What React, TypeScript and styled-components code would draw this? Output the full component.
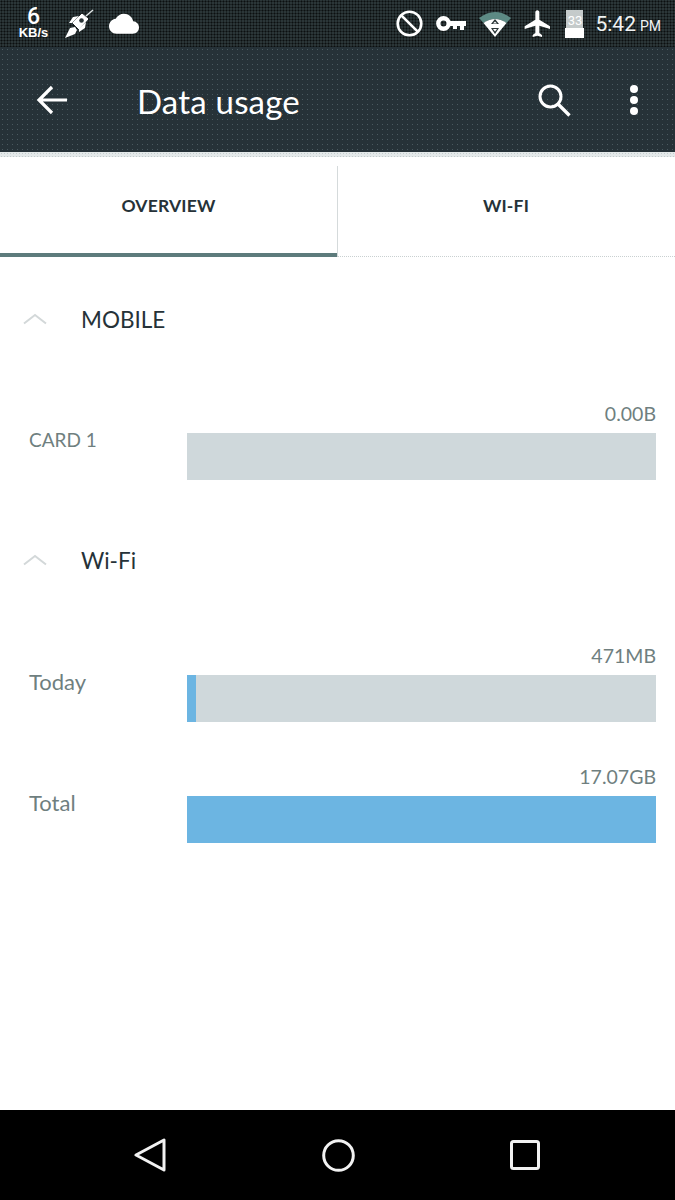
import React from "react";
import styled, { createGlobalStyle } from "styled-components";

const GlobalStyle = createGlobalStyle`
  html, body {
    margin: 0;
    padding: 0;
    background: #fff;
  }
`;

const Page = styled.div`
  width: 675px;
  height: 1200px;
  display: flex;
  flex-direction: column;
  overflow: hidden;
  background: #fff;
  font-family: Lato, "Open Sans", sans-serif;
`;

const StatusBar = styled.div`
  height: 47px;
  flex: none;
  display: flex;
  align-items: center;
  justify-content: space-between;
  padding: 0 14px 0 17px;
  box-sizing: border-box;
  color: #fff;
  background-color: #2b3638;
  background-image: radial-gradient(#0b0f10 0.9px, transparent 1.1px);
  background-size: 3px 3px;
`;

const StatusGroup = styled.div`
  display: flex;
  align-items: center;
  gap: ${(p: { $gap: number }) => p.$gap}px;
`;

const Speed = styled.div`
  width: 33px;
  display: flex;
  flex-direction: column;
  align-items: center;
  font-family: "Liberation Sans", Arial, sans-serif;
  font-weight: 700;
  font-size: 13px;
  line-height: 15px;

  b {
    font-size: 23px;
    line-height: 17px;
    font-family: Roboto, sans-serif;
    font-weight: 500;
  }
`;

const Clock = styled.div`
  margin-left: -2px;
  display: flex;
  align-items: baseline;
  gap: 4px;
  font-family: Roboto, sans-serif;
  font-size: 21px;
  color: #f1f3f3;

  small {
    font-size: 14px;
  }
`;

const BatteryBox = styled.div`
  width: 19px;
  height: 28px;
  display: flex;
  flex-direction: column;
`;

const BatteryEmpty = styled.div`
  height: 18px;
  background-color: #7d8788;
  background-image: radial-gradient(#c8cdcd 0.7px, transparent 0.9px);
  background-size: 2px 2px;
  display: flex;
  align-items: flex-end;
  justify-content: center;
  font-family: Roboto, sans-serif;
  font-size: 13px;
  line-height: 14px;
  color: #fff;
  margin: 0 1px;
`;

const BatteryFull = styled.div`
  flex: 1;
  background: #fff;
`;

const Toolbar = styled.div`
  height: 105px;
  flex: none;
  display: flex;
  align-items: center;
  box-sizing: border-box;
  padding: 0 36px 0 36px;
  background-color: #263238;
  background-image: radial-gradient(#4a5a60 0.55px, transparent 0.75px);
  background-size: 5px 5px;
  color: #fff;
`;

const Title = styled.div`
  flex: 1;
  margin-left: 69px;
  padding-top: 3px;
  font-size: 33px;
  font-weight: 400;
  letter-spacing: 0.2px;
`;

const ToolbarActions = styled.div`
  display: flex;
  align-items: center;
  gap: 58px;
`;

const ShadowStrip = styled.div`
  height: 5px;
  flex: none;
  background-color: #e4e9ea;
  background-image: radial-gradient(#c3cccd 0.8px, transparent 1px);
  background-size: 3px 3px;
`;

const Tabs = styled.div`
  display: grid;
  grid-template-columns: 337px 1fr;
  height: 100px;
  flex: none;
`;

const Tab = styled.div<{ $active?: boolean }>`
  display: flex;
  align-items: center;
  justify-content: center;
  box-sizing: border-box;
  padding-bottom: ${(p) => (p.$active ? "0" : "3px")};
  font-size: 17.5px;
  font-weight: 700;
  letter-spacing: 0.2px;
  color: #263238;
  border-bottom: ${(p) => (p.$active ? "4px solid #5d7b7c" : "1px dotted #c9d0d1")};
  background: ${(p) =>
    p.$active ? "none" : "linear-gradient(#d5dadb, #d5dadb) left bottom / 1px 90px no-repeat"};
`;

const Content = styled.div`
  flex: 1;
  display: flex;
  flex-direction: column;
  padding: 0 19px 0 0;
`;

const SectionHeader = styled.div<{ $top: number }>`
  display: flex;
  align-items: center;
  gap: 34px;
  padding-left: 23px;
  margin-top: ${(p) => p.$top}px;
  height: 34px;
  font-size: 22.5px;
  color: #263238;
`;

const UsageRow = styled.div<{ $top: number }>`
  display: grid;
  grid-template-columns: 187px 1fr;
  margin-top: ${(p) => p.$top}px;
`;

const RowLabel = styled.div<{ $size: number }>`
  padding: 24px 0 0 29px;
  font-size: ${(p) => p.$size}px;
  line-height: 30px;
  color: #6f7f7f;
`;

const RowValue = styled.div`
  text-align: right;
  font-size: 19.5px;
  line-height: 26px;
  padding-bottom: 6px;
  color: #6f7f7f;
`;

const Bar = styled.div`
  height: 47px;
  background: #cfd8db;
`;

const BarFill = styled.div`
  height: 100%;
  background: #6cb5e2;
`;

const NavBar = styled.div`
  height: 90px;
  flex: none;
  background: #000;
  display: flex;
  align-items: center;
  justify-content: space-between;
  box-sizing: border-box;
  padding: 0 135px 0 134px;
`;

const usage = {
  mobile: [{ label: "CARD 1", value: "0.00B", percent: 0, size: 19 }],
  wifi: [
    { label: "Today", value: "471MB", percent: 2, size: 22 },
    { label: "Total", value: "17.07GB", percent: 100, size: 22 },
  ],
};

function Chevron() {
  return (
    <svg width="24" height="12" viewBox="0 0 24 12">
      <path d="M1 10.500 12 2l11 8.500" fill="none" stroke="#d3d8d9" strokeWidth="2" />
    </svg>
  );
}

function Usage({
  label,
  value,
  percent,
  size,
  top,
}: {
  label: string;
  value: string;
  percent: number;
  size: number;
  top: number;
}) {
  return (
    <UsageRow $top={top}>
      <RowLabel $size={size}>{label}</RowLabel>
      <div>
        <RowValue>{value}</RowValue>
        <Bar>
          <BarFill style={{ width: `${percent}%` }} />
        </Bar>
      </div>
    </UsageRow>
  );
}

export default function App() {
  return (
    <Page>
      <GlobalStyle />
      <StatusBar>
        <StatusGroup $gap={14}>
          <Speed>
            <b>6</b>
            KB/s
          </Speed>
          <svg width="30" height="30" viewBox="0 0 30 30">
            <path d="M1 29l5-10 5-1 2 3-2 4z" fill="#fff" />
            <path d="M9 14l9-9 6 5-9 10z" fill="#fff" stroke="#fff" strokeWidth="1" />
            <path d="M9 8l6-1-7 7-3 0zM21 19l1-6-7 7 0 3z" fill="#fff" />
            <path d="M22 7l7-6" stroke="#dfe4e4" strokeWidth="1.500" />
            <circle cx="17.500" cy="11.500" r="2.300" fill="#2b3638" />
          </svg>
          <svg width="30" height="22" viewBox="0 0 24 17.500" style={{ marginLeft: 1 }}>
            <path
              d="M19.350 6.540C18.670 3.090 15.640.5 12 .5 9.110.5 6.600 2.140 5.350 4.540 2.340 4.860 0 7.410 0 10.500c0 3.310 2.690 6 6 6h13c2.760 0 5-2.240 5-5 0-2.640-2.050-4.780-4.650-4.960z"
              fill="#fff"
            />
          </svg>
        </StatusGroup>
        <StatusGroup $gap={13}>
          <svg width="27" height="27" viewBox="0 0 27 27">
            <circle cx="13.500" cy="13.500" r="11.800" fill="none" stroke="#fff" strokeWidth="2.600" />
            <path d="M5.300 5.300l16.400 16.400" stroke="#fff" strokeWidth="2.600" />
          </svg>
          <svg width="30" height="15" viewBox="0 0 30 15">
            <circle cx="7.500" cy="7.500" r="5.200" fill="none" stroke="#fff" strokeWidth="4.400" />
            <path d="M13 5h17v5h-2v4h-4v-4h-3v3h-4v-3h-4z" fill="#fff" />
          </svg>
          <svg width="32" height="28" viewBox="0 0 32 28">
            <path d="M0 8Q16-4 32 8l-4.500 5Q16 5 4.500 13z" fill="#5d8a84" />
            <path d="M4.500 13Q16 5 27.500 13L16 27z" fill="#fff" />
            <path d="M16 9l4 5h-8zM16 24l-4-6h8z" fill="#2b3638" />
            <path d="M16 11.500l2 2h-4zM16 21.500l-2-2.500h4z" fill="#fff" />
          </svg>
          <svg width="28" height="30" viewBox="1.500 1.500 21 21.500">
            <path
              d="M21 16v-2l-8-5V3.500c0-.83-.67-1.500-1.500-1.500S10 2.670 10 3.500V9l-8 5v2l8-2.500V19l-2 1.500V22l3.500-1 3.500 1v-1.500L13 19v-5.500l8 2.500z"
              fill="#fff"
            />
          </svg>
          <BatteryBox>
            <BatteryEmpty>33</BatteryEmpty>
            <BatteryFull />
          </BatteryBox>
          <Clock>
            5:42 <small>PM</small>
          </Clock>
        </StatusGroup>
      </StatusBar>

      <Toolbar>
        <svg width="32" height="30" viewBox="0 0 32 30">
          <path d="M31 15H3M16 2 3 15l13 13" fill="none" stroke="#fff" strokeWidth="3.200" />
        </svg>
        <Title>Data usage</Title>
        <ToolbarActions>
          <svg width="34" height="34" viewBox="0 0 34 34">
            <circle cx="13.500" cy="13.500" r="10.500" fill="none" stroke="#fff" strokeWidth="3" />
            <path d="M21 21l11.500 11.500" stroke="#fff" strokeWidth="3.400" />
          </svg>
          <svg width="10" height="32" viewBox="0 0 10 32">
            <circle cx="5" cy="5" r="4" fill="#fff" />
            <circle cx="5" cy="16" r="4" fill="#fff" />
            <circle cx="5" cy="27" r="4" fill="#fff" />
          </svg>
        </ToolbarActions>
      </Toolbar>
      <ShadowStrip />

      <Tabs>
        <Tab $active>OVERVIEW</Tab>
        <Tab>WI-FI</Tab>
      </Tabs>

      <Content>
        <SectionHeader $top={45}>
          <Chevron />
          MOBILE
        </SectionHeader>
        {usage.mobile.map((row) => (
          <Usage key={row.label} {...row} top={65} />
        ))}
        <SectionHeader $top={63}>
          <Chevron />
          Wi-Fi
        </SectionHeader>
        {usage.wifi.map((row, i) => (
          <Usage key={row.label} {...row} top={i === 0 ? 66 : 42} />
        ))}
      </Content>

      <NavBar>
        <svg width="32" height="34" viewBox="0 0 32 34">
          <path d="M30 2v30L2 17z" fill="none" stroke="#f2f2f2" strokeWidth="3" strokeLinejoin="round" />
        </svg>
        <svg width="33" height="33" viewBox="0 0 33 33">
          <circle cx="16.500" cy="16.500" r="14.800" fill="none" stroke="#f2f2f2" strokeWidth="3" />
        </svg>
        <svg width="30" height="30" viewBox="0 0 30 30">
          <rect x="1.500" y="1.500" width="27" height="27" rx="2" fill="none" stroke="#f2f2f2" strokeWidth="3" />
        </svg>
      </NavBar>
    </Page>
  );
}
